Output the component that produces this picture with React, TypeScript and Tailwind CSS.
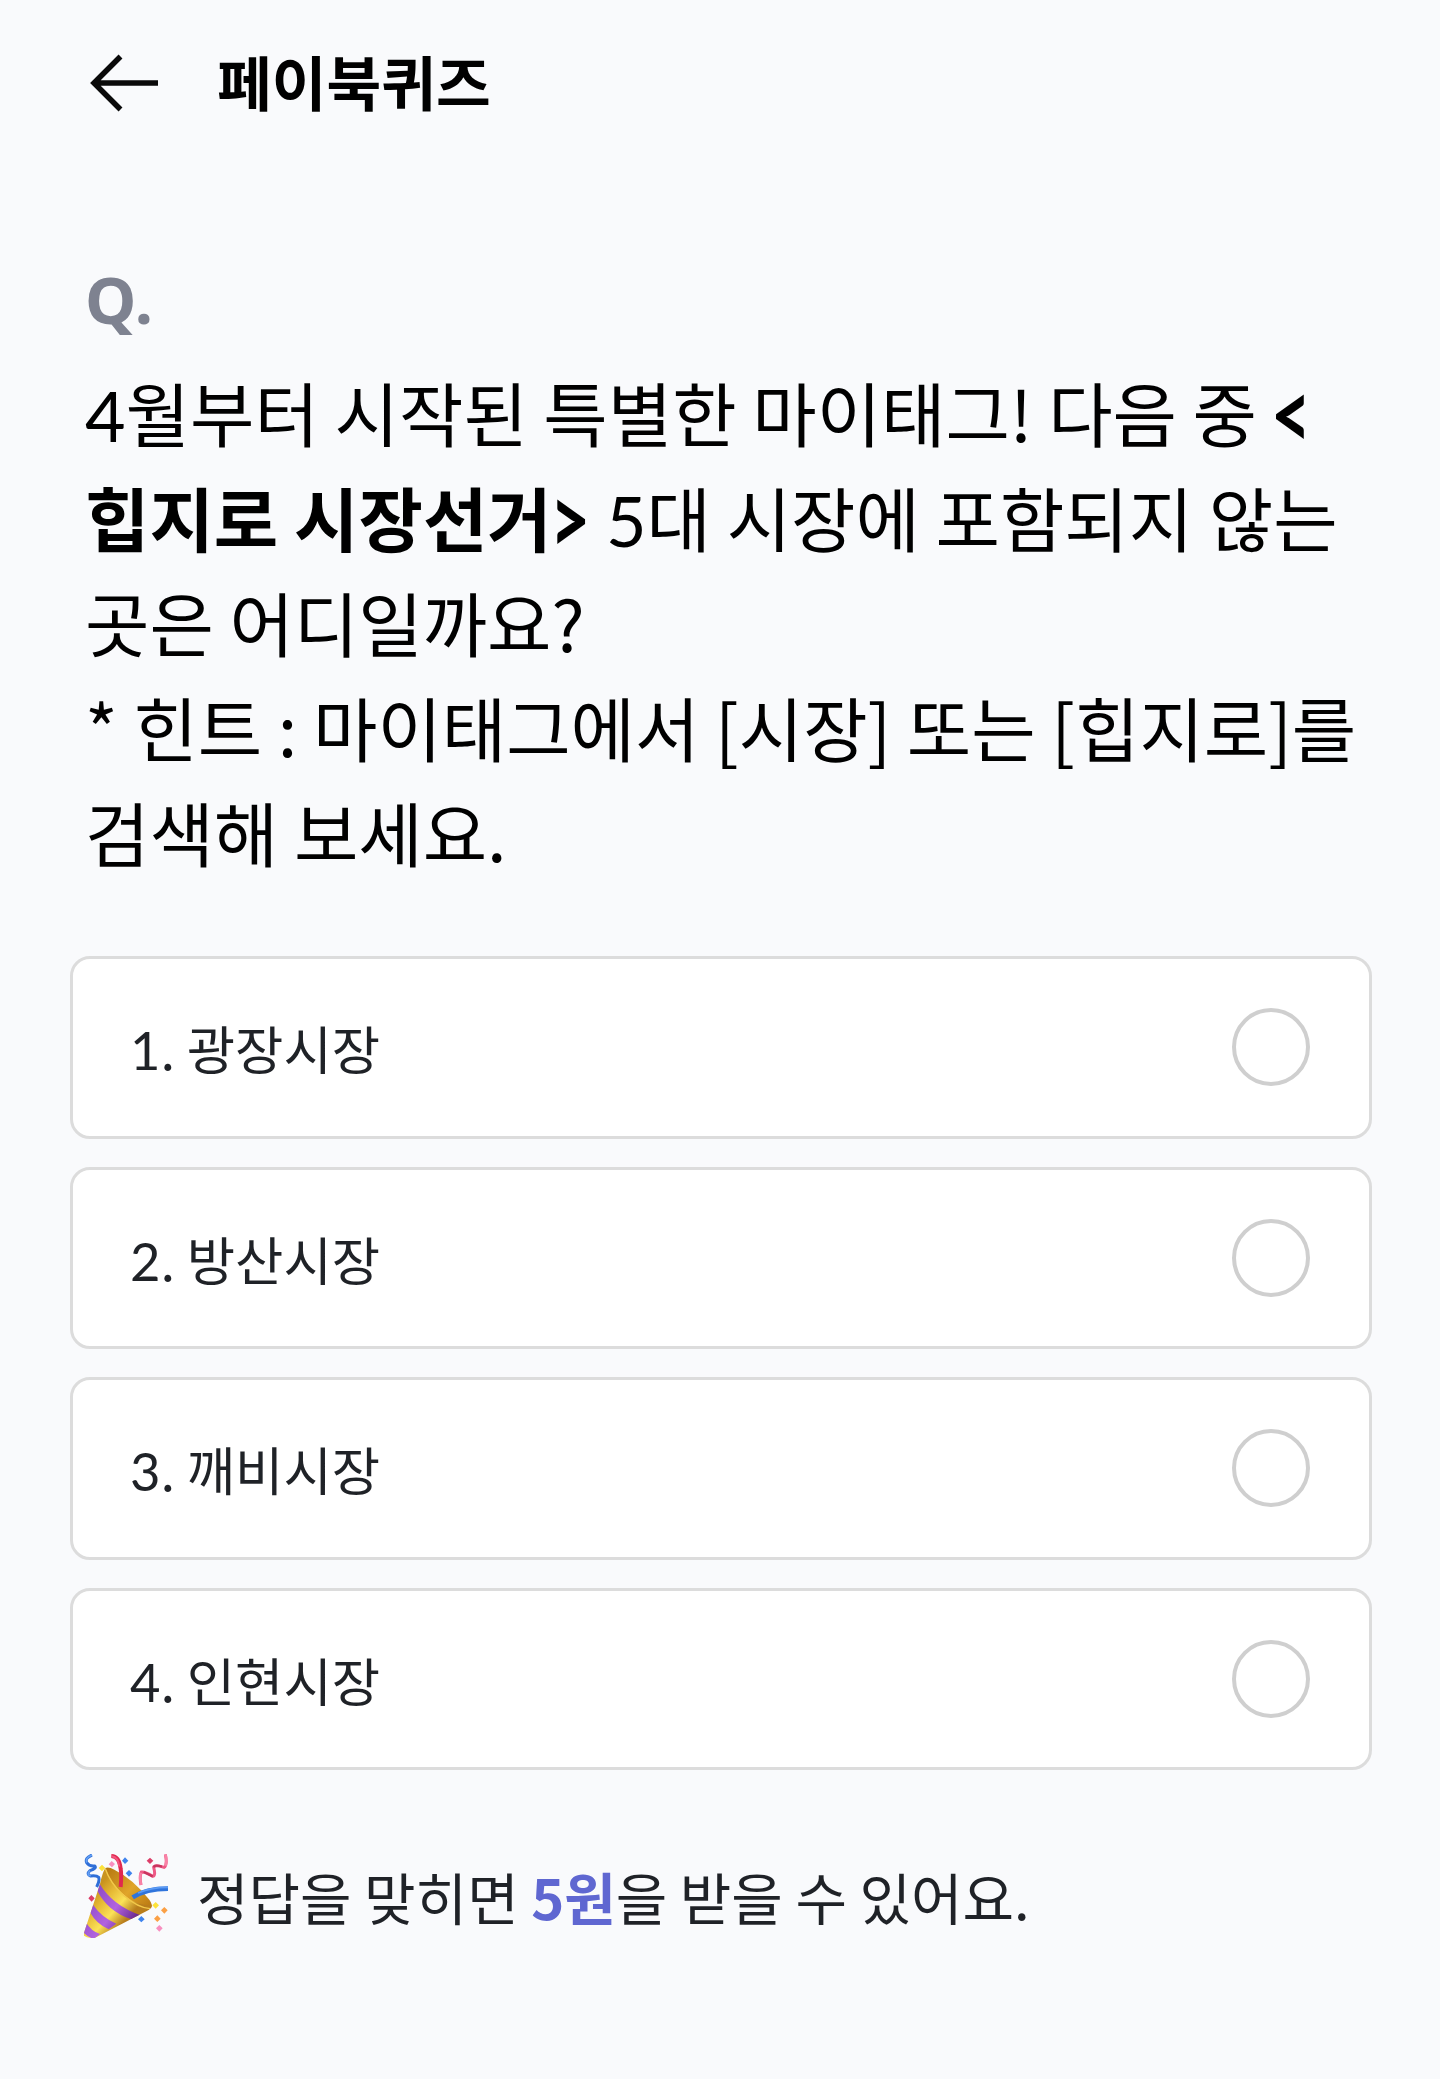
import React, { type ReactNode } from "react";

const choices = ["광장시장", "방산시장", "깨비시장", "인현시장"];

function Num({ children }: { children: ReactNode }) {
  return <span className="font-['Lato',sans-serif] leading-none">{children}</span>;
}

function Bracket({ children }: { children: ReactNode }) {
  return (
    <b className="-ml-0.5 inline-block origin-[50%_60%] scale-y-[1.36] font-['Lato',sans-serif] leading-none">
      {children}
    </b>
  );
}

function PartyPopper() {
  return (
    <svg viewBox="42 44 252 252" className="size-[84px] shrink-0" fill="none">
      <defs>
        <linearGradient id="cone" x1="70" y1="160" x2="165" y2="245" gradientUnits="userSpaceOnUse">
          <stop stopColor="#c9931f" />
          <stop offset="0.3" stopColor="#e6b935" />
          <stop offset="0.65" stopColor="#fbe258" />
          <stop offset="1" stopColor="#b87d1c" />
        </linearGradient>
        <linearGradient id="mouth" x1="115" y1="90" x2="235" y2="200" gradientUnits="userSpaceOnUse">
          <stop stopColor="#b87a12" />
          <stop offset="0.55" stopColor="#e0a52a" />
          <stop offset="1" stopColor="#bd7d14" />
        </linearGradient>
        <linearGradient id="stripe" x1="60" y1="150" x2="190" y2="240" gradientUnits="userSpaceOnUse">
          <stop stopColor="#8747c4" />
          <stop offset="0.6" stopColor="#b263df" />
          <stop offset="1" stopColor="#6f2d94" />
        </linearGradient>
        <clipPath id="coneShape">
          <path d="M106 86 Q97 100 90 134 L42 280 L42 289 Q54 298 74 296 L236 212 Q246 207 245 198 Q190 200 145 150 Q118 118 106 86Z" />
        </clipPath>
      </defs>
      <path d="M106 86 Q116 82 133 91 Q188 118 238 181 Q250 198 243 206 Q220 216 176 180 Q120 138 106 86Z" fill="url(#mouth)" />
      <g clipPath="url(#coneShape)">
        <path d="M40 80H250V300H40Z" fill="url(#cone)" />
        <path d="M88 132 Q126 198 212 228 L184 240 Q112 215 82 154Z" fill="url(#stripe)" />
        <path d="M69 196 Q94 233 139 253 L116 270 Q78 252 61 220Z" fill="url(#stripe)" />
        <path d="M49 250 Q62 274 90 284 L72 299 Q50 292 38 276Z" fill="url(#stripe)" />
      </g>
      <path d="M106 88 Q120 130 160 168 Q204 206 240 208" stroke="#f3c94a" strokeWidth="4" />
      <path d="M124 50 Q148 51 152 88 Q155 108 152 143" stroke="#e0294f" strokeWidth="12" />
      <path d="M126 51 Q144 54 148 82" stroke="#f2557f" strokeWidth="6" />
      <path d="M188 174 Q228 148 294 148" stroke="#2f74dc" strokeWidth="14" />
      <path d="M204 161 Q240 144 294 144" stroke="#5c9bf5" strokeWidth="5" />
      <path d="M66 47 Q44 56 50 70 Q58 82 74 80 Q82 86 60 94 Q48 105 62 110 Q80 108 86 114 Q90 124 80 143" stroke="#2f6fd8" strokeWidth="9" />
      <path d="M66 47 Q44 56 50 70 M60 94 Q48 105 62 110" stroke="#64a0f4" strokeWidth="5" />
      <path d="M213 137 Q208 112 214 98 Q225 96 248 111 Q258 110 251 84 Q253 75 282 84 Q293 78 286 45" stroke="#ee5a86" strokeWidth="9" />
      <path d="M221 98 L248 111 M251 84 Q254 75 276 82" stroke="#c8355f" strokeWidth="7" />
      <path d="M213 137 Q209 115 212 100 M286 45 Q292 65 286 79" stroke="#f982a6" strokeWidth="8" />
      <path d="M96 76l10 10-10 10-10-10Z M257 188l10 10-10 10-10-10Z" fill="#fde33b" />
      <path d="M125 65l10 9-9 10-10-9Z M268 257l10 10-10 10-10-10Z" fill="#f88fc0" />
      <path d="M165 54l10 10-10 10-9-10Z M177 92l10 10-10 10-10-10Z M214 230l10 10-10 9-10-9Z" fill="#3f84ee" />
      <path d="M240 55l10 9-10 10-10-10Z M64 167l10 10-9 10-10-10Z" fill="#dc3f69" />
      <path d="M283 203l10 10-10 10-10-10Z M262 228l10 10-10 10-10-10Z" fill="#fba045" />
    </svg>
  );
}

export default function App() {
  return (
    <div className="h-[2093px] w-[1440px] overflow-hidden bg-white">
      <main className="h-[2079px] bg-[#f9fafc] font-['Noto_Sans_CJK_KR',sans-serif] text-black">
        <header className="flex h-[166px] items-center pl-[88px]">
          <svg viewBox="0 0 72 60" className="h-[60px] w-[72px]" fill="none" stroke="#0a0a0a" strokeWidth="5.5">
            <path d="M32.500 3.500 L6 30 L32.500 56.500 M5 30H70" />
          </svg>
          <h1 className="mb-1 ml-[57px] text-[59.5px] leading-none font-bold">페이북퀴즈</h1>
        </header>
        <section className="px-[85px] pt-[85px]">
          <div className="font-['Noto_Sans',sans-serif] text-[65px] leading-[96px] font-bold tracking-[1px] text-[#7e8290]">Q.</div>
          <p className="mt-3 text-[70px] leading-[105px] whitespace-nowrap">
            <Num>4</Num>월부터 시작된 특별한 마이태그! 다음 중 <Bracket>&lt;</Bracket>
            <br />
            <b>힙지로 시장선거</b>
            <Bracket>&gt;</Bracket> <Num>5</Num>대 시장에 포함되지 않는
            <br />
            곳은 어디일까요?
            <br />* 힌트 : 마이태그에서 [시장] 또는 [힙지로]를
            <br />
            검색해 보세요.
          </p>
        </section>
        <ol className="mt-[72px] flex flex-col gap-7 pr-[68px] pl-[70px]">
          {choices.map((name, i) => (
            <li
              key={name}
              className="flex h-[182.6px] items-center justify-between rounded-[20px] border-3 border-[#dcdcdc] bg-white pr-[59px] pl-[57px] text-[52.5px] text-[#1f2227]"
            >
              <span>
                <Num>{i + 1}</Num>. {name}
              </span>
              <span className="size-[78px] rounded-full border-4 border-[#cfcfcf]" />
            </li>
          ))}
        </ol>
        <footer className="mt-[84px] flex h-[84px] items-center pl-[84px] text-[56px] leading-none text-[#1f2227]">
          <PartyPopper />
          <p className="ml-[29px]">
            정답을 맞히면 <b className="text-[#5f67d1]">5원</b>을 받을 수 있어요.
          </p>
        </footer>
      </main>
    </div>
  );
}
